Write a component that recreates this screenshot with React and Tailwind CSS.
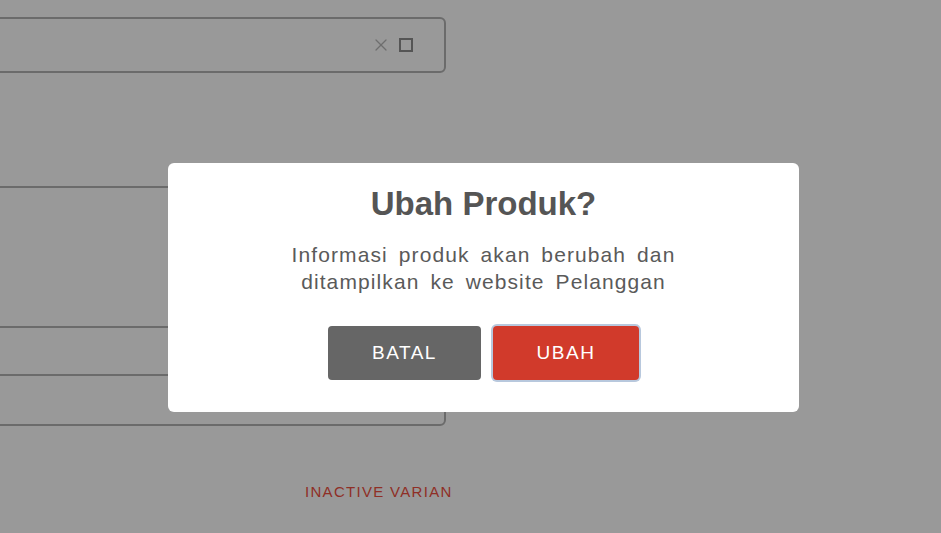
import { X } from "lucide-react";

export default function App() {
  return (
    <div className="relative h-[533px] w-full overflow-hidden bg-[#999999] font-['Liberation_Sans',Arial,sans-serif]">
      {/* page underneath the dialog */}
      <div className="-ml-5 w-[466px] pt-[17px]">
        <div className="flex h-[56px] items-center justify-end gap-[8px] rounded-md border-2 border-[#6b6b6b] pr-[31px]">
          <X size={20} strokeWidth={1.5} className="text-[#6e6e6e]" />
          <div className="h-[14px] w-[14px] border-2 border-[#555555]" />
        </div>

        <div className="mt-[113px] rounded-md border-2 border-[#6b6b6b]">
          <div className="h-[138px]" />
          <div className="h-[48px] border-t-2 border-[#6b6b6b]" />
          <div className="h-[50px] border-t-2 border-[#6b6b6b]" />
        </div>

        <div className="mt-[56px] whitespace-nowrap pl-[325px] text-[15px] leading-[20px] tracking-[1.3px] text-[#8f2f26]">
          INACTIVE VARIAN
        </div>
      </div>

      {/* dialog */}
      <div className="fixed inset-0 pl-[168px] pt-[163px]">
        <div className="flex h-[249px] w-[631px] flex-col items-center rounded-md bg-white pt-[21px]">
          <h2 className="text-[33px] font-bold leading-[40px] text-[#555555]">Ubah Produk?</h2>
          <p className="mt-[17px] text-center text-[21px] leading-[27px] tracking-[1.1px] text-[#5a5a5a] [word-spacing:4px]">
            Informasi produk akan berubah dan
            <br />
            ditampilkan ke website Pelanggan
          </p>
          <div className="mt-[31px] flex gap-[12px]">
            <button className="h-[54px] w-[153px] rounded bg-[#666666] text-[19px] tracking-[1.5px] text-white">
              BATAL
            </button>
            <button className="h-[54px] w-[146px] rounded bg-[#d13a2b] text-[19px] tracking-[1.5px] text-white ring-2 ring-[#b8c8dd]">
              UBAH
            </button>
          </div>
        </div>
      </div>
    </div>
  );
}
